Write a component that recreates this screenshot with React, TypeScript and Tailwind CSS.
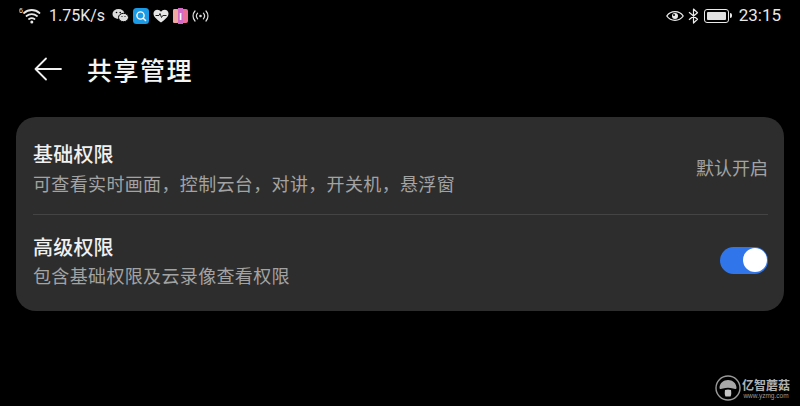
const cjk = "font-['Noto_Sans_CJK_SC','Noto_Sans',sans-serif]";

function Wifi() {
  return (
    <svg width="24" height="19" viewBox="0 0 24 19" fill="none" stroke="#e8e8e8" strokeLinecap="round">
      <path d="M5 7C9.500 3 16 3 20.500 7" strokeWidth="1.800" />
      <path d="M7.500 10C10.500 7.500 15 7.500 18 10" strokeWidth="1.800" />
      <path d="M10 13C11.500 12 14 12 15.500 13" strokeWidth="1.800" />
      <circle cx="12.800" cy="16" r="1.500" fill="#e8e8e8" stroke="none" />
      <text x="0" y="6.500" fontSize="7" fill="#e8e8e8" stroke="none" fontFamily="Liberation Sans">6</text>
    </svg>
  );
}

function WeChat() {
  return (
    <svg width="17" height="15" viewBox="0 0 17 15">
      <ellipse cx="6.500" cy="6" rx="6" ry="5" fill="#dcdcdc" />
      <ellipse cx="11.500" cy="9.500" rx="5" ry="4.200" fill="#dcdcdc" stroke="#000" strokeWidth="1" />
      <circle cx="4.500" cy="4.500" r=".8" fill="#000" />
      <circle cx="8.200" cy="4.500" r=".8" fill="#000" />
      <circle cx="10" cy="8.500" r=".6" fill="#000" />
      <circle cx="13" cy="8.500" r=".6" fill="#000" />
    </svg>
  );
}

function SearchApp() {
  return (
    <svg width="16" height="16" viewBox="0 0 16 16">
      <rect width="16" height="16" rx="3.500" fill="#1b9ae6" />
      <circle cx="7.500" cy="7.500" r="3.600" fill="none" stroke="#fff" strokeWidth="1.400" />
      <path d="M10.200 10.200L12.600 12.600" stroke="#fff" strokeWidth="1.400" strokeLinecap="round" />
    </svg>
  );
}

function HeartApp() {
  return (
    <svg width="16" height="14" viewBox="0 0 16 14">
      <path d="M8 13.500C3 10 .5 7.600.5 4.600.5 2.300 2.300.8 4.300.8 5.800.8 7.200 1.600 8 2.800 8.800 1.600 10.200.8 11.700.8c2 0 3.800 1.500 3.800 3.800 0 3-2.500 5.400-7.500 8.900z" fill="#e6e6e6" />
      <path d="M2.500 6.500H6L7 4.500 8.500 8.500 9.800 6.500H13.500" fill="none" stroke="#222" strokeWidth="1" />
    </svg>
  );
}

function BookApp() {
  return (
    <svg width="15" height="16" viewBox="0 0 15 16">
      <rect x="0" y="1" width="15" height="14" rx="2" fill="#ec6f98" />
      <rect x="0" y="1" width="5" height="14" rx="1.500" fill="#f0a9a0" />
      <rect x="5" y="0" width="5" height="16" fill="#d36bc6" />
      <rect x="6.800" y="5" width="1.600" height="7" fill="#fff" />
    </svg>
  );
}

function Hotspot() {
  return (
    <svg width="17" height="12" viewBox="0 0 17 12" fill="none" stroke="#dcdcdc" strokeWidth="1.200" strokeLinecap="round">
      <circle cx="8.500" cy="6" r="1.300" fill="#dcdcdc" stroke="none" />
      <path d="M5.600 3.200C4.200 4.800 4.200 7.200 5.600 8.800" />
      <path d="M11.400 3.200C12.800 4.800 12.800 7.200 11.400 8.800" />
      <path d="M3 1C.4 3.800.4 8.200 3 11" />
      <path d="M14 1C16.600 3.800 16.600 8.200 14 11" />
    </svg>
  );
}

function Eye() {
  return (
    <svg width="18" height="12" viewBox="0 0 18 12" fill="none" stroke="#eaeaea" strokeWidth="1.300">
      <path d="M.8 6C4.800.2 13.200.2 17.200 6 13.200 11.800 4.800 11.800.8 6z" />
      <circle cx="9" cy="6" r="3" fill="#eaeaea" stroke="none" />
      <circle cx="8" cy="5" r="1" fill="#000" stroke="none" />
    </svg>
  );
}

function Bluetooth() {
  return (
    <svg width="11" height="16" viewBox="0 0 11 16" fill="none" stroke="#eaeaea" strokeWidth="1.200" strokeLinejoin="round">
      <path d="M1 4.200L9.500 11.300 5.500 15V1L9.500 4.700 1 11.800" />
    </svg>
  );
}

function Battery() {
  return (
    <div className="flex items-center gap-[1px]">
      <div className="w-[25px] h-[14px] rounded-[3px] border border-[#eaeaea] p-[2px]">
        <div className="w-full h-full rounded-[1px] bg-[#e0e0e0]" />
      </div>
      <div className="w-[2px] h-[5px] rounded-r-sm bg-[#eaeaea]" />
    </div>
  );
}

function Logo() {
  return (
    <svg width="26" height="26" viewBox="0 0 26 26">
      <circle cx="13" cy="13" r="12" fill="none" stroke="#999" strokeWidth="1.400" />
      <path d="M4.500 13C4.500 8 8.500 5 13 5s8.500 3 8.500 8c0 1.200-1.600 1.200-3.500.6-3-1-7-1-10 0C6 14.200 4.500 14.200 4.500 13z" fill="#a8a8a8" />
      <path d="M10 15c2-.7 4-.7 6 0 .4 3 .4 5-.5 6.500h-5C9.600 20 9.600 18 10 15z" fill="#c4c4c4" />
    </svg>
  );
}

export default function App() {
  return (
    <div className={`relative w-[800px] h-[406px] overflow-hidden bg-black text-white ${cjk}`}>
      <div className="h-[31px] flex items-center justify-between pl-[19px] pr-[19px]">
        <div className="flex items-center">
          <Wifi />
          <span className="ml-[6px] mr-[7px] text-[16px] leading-none text-[#e8e8e8] font-['Roboto',sans-serif]">1.75K/s</span>
          <div className="flex items-center gap-[4px]">
            <WeChat />
            <SearchApp />
            <HeartApp />
            <BookApp />
            <Hotspot />
          </div>
        </div>
        <div className="flex items-center">
          <Eye />
          <div className="ml-[4px] mr-[5px]"><Bluetooth /></div>
          <Battery />
          <span className="ml-[7px] text-[17px] leading-none text-[#e8e8e8] font-['Roboto',sans-serif]">23:15</span>
        </div>
      </div>

      <div className="h-[76px] flex items-center pl-[34px]">
        <svg width="28" height="24" viewBox="0 0 28 24" fill="none" stroke="#f0f0f0" strokeWidth="1.800" strokeLinecap="round" strokeLinejoin="round">
          <path d="M27 12H1.500M12 1.500L1.500 12 12 22.500" />
        </svg>
        <span className="ml-[25px] text-[25px] leading-none font-medium tracking-[1.500px] text-[#f4f4f4]">共享管理</span>
      </div>

      <div className="mx-[16px] mt-[10px] h-[194px] rounded-[20px] bg-[#2d2d2d] pl-[17px] pr-[16px]">
        <div className="h-[98px] flex items-center justify-between border-b border-[#444444]">
          <div className="pt-[3px]">
            <div className="text-[20px] leading-[28px] font-medium tracking-[0.200px] text-[#f0f0f0]">基础权限</div>
            <div className="mt-[3px] text-[18px] leading-[24px] tracking-[0.350px] text-[#a3a3a3]">可查看实时画面，控制云台，对讲，开关机，悬浮窗</div>
          </div>
          <span className="text-[18px] leading-[24px] text-[#a3a3a3] mt-[2px]">默认开启</span>
        </div>
        <div className="h-[96px] flex items-center justify-between">
          <div className="pb-[7px]">
            <div className="text-[20px] leading-[28px] font-medium tracking-[0.200px] text-[#f0f0f0]">高级权限</div>
            <div className="mt-[2px] text-[18px] leading-[24px] tracking-[0.350px] text-[#a3a3a3]">包含基础权限及云录像查看权限</div>
          </div>
          <div className="w-[48px] h-[27px] rounded-full bg-[#3076ea] flex items-center justify-end pr-[1px] mb-[6px]">
            <div className="w-[24px] h-[24px] rounded-full bg-white" />
          </div>
        </div>
      </div>

      <div className="absolute left-[715px] top-[375px] flex items-center gap-[1px] whitespace-nowrap">
        <Logo />
        <div className="flex flex-col items-center">
          <span className="text-[12px] leading-[15px] font-bold text-[#b0b0b0]">亿智蘑菇</span>
          <span className="text-[6.500px] leading-[7px] text-[#9a9a9a] font-['Liberation_Sans',sans-serif]">www.yzmg.com</span>
        </div>
      </div>
    </div>
  );
}
